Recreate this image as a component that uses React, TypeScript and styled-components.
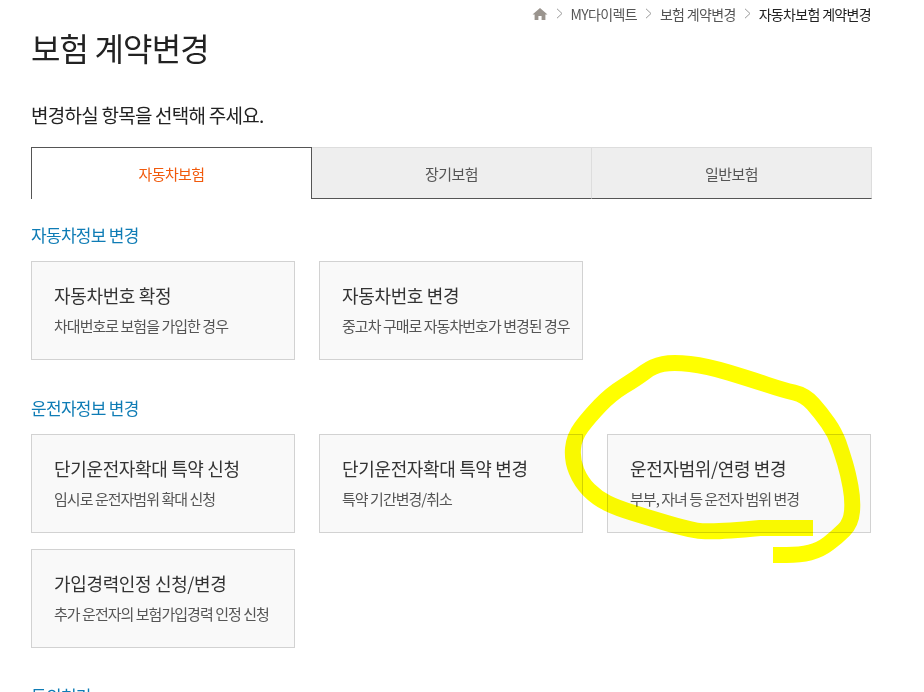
import React from "react";
import styled, { createGlobalStyle } from "styled-components";

const Global = createGlobalStyle`
  html, body { margin: 0; padding: 0; height: 692px; overflow: hidden; background: #fff; }
  body { font-family: "Noto Sans CJK KR", "Noto Sans", sans-serif; color: #222; }
`;

const Page = styled.main`
  position: relative;
  width: 841px;
  height: 692px;
  padding-left: 31px;
  overflow: hidden;
`;

const Breadcrumb = styled.nav`
  display: flex;
  justify-content: flex-end;
  align-items: center;
  height: 27px;
  padding-right: 1px;
  font-size: 14px;
  letter-spacing: -0.67px;
  color: #555;
`;

const Crumb = styled.span<{ $current?: boolean }>`
  color: ${(p) => (p.$current ? "#222" : "#555")};
`;

const SepIcon = styled.svg`
  width: 9px;
  height: 11px;
  margin: 0 7px;
`;

const Title = styled.h1`
  margin: 0;
  height: 41px;
  font-size: 32px;
  line-height: 41px;
  font-weight: 400;
  letter-spacing: -0.85px;
  color: #222;
`;

const Lead = styled.p`
  margin: 35px 0 0;
  height: 24px;
  font-size: 19px;
  line-height: 24px;
  letter-spacing: -0.75px;
  color: #222;
`;

const Tabs = styled.div`
  display: grid;
  grid-template-columns: 281px 280px 280px;
  height: 52px;
  margin-top: 20px;
`;

const Tab = styled.div<{ $active?: boolean }>`
  box-sizing: border-box;
  display: flex;
  align-items: center;
  justify-content: center;
  font-size: 15px;
  letter-spacing: -0.6px;
  background: ${(p) => (p.$active ? "#fff" : "#eee")};
  color: ${(p) => (p.$active ? "#f15a0c" : "#555")};
  border: 1px solid #555;
  border-bottom: ${(p) => (p.$active ? "none" : "1px solid #555")};
  ${(p) =>
    !p.$active &&
    `border-top-color: #ddd; border-left-color: #ddd; border-right-color: #ddd; border-left-width: 0;`}
`;

const SectionTitle = styled.h2<{ $gap: number }>`
  margin: ${(p) => p.$gap}px 0 0;
  height: 24px;
  font-size: 17px;
  line-height: 24px;
  font-weight: 400;
  letter-spacing: -0.7px;
  color: #0f7cb5;
`;

const CardGrid = styled.div`
  display: grid;
  grid-template-columns: repeat(3, 264px);
  grid-auto-rows: 99px;
  gap: 16px 24px;
  margin-top: 14px;
`;

const Card = styled.a`
  box-sizing: border-box;
  display: flex;
  flex-direction: column;
  padding: 20px 22px 0;
  background: #f9f9f9;
  border: 1px solid #d2d2d2;
`;

const CardTitle = styled.strong`
  height: 26px;
  font-size: 18px;
  line-height: 26px;
  font-weight: 400;
  letter-spacing: -0.35px;
  color: #333;
  white-space: nowrap;
`;

const CardText = styled.span`
  margin-top: 8px;
  font-size: 15px;
  line-height: 20px;
  letter-spacing: -0.97px;
  color: #555;
  white-space: nowrap;
`;

const Scribble = styled.svg`
  position: absolute;
  inset: 0;
  width: 924px;
  height: 692px;
  mix-blend-mode: multiply;
  pointer-events: none;
`;

const HomeIcon = () => (
  <svg width="16" height="14" viewBox="0 0 16 14" aria-hidden="true">
    <path d="M8 1 L15.5 7.6 L13.4 7.6 L13.4 13 L9.6 13 L9.6 9 L6.4 9 L6.4 13 L2.6 13 L2.6 7.6 L.5 7.6 Z" fill="#9a948e" />
  </svg>
);

const Sep = () => (
  <SepIcon viewBox="0 0 9 11" aria-hidden="true">
    <path d="M2 .8 L7 5.5 L2 10.2" fill="none" stroke="#999" strokeWidth="1" />
  </SepIcon>
);

const Item = ({ title, text }: { title: string; text: string }) => (
  <Card>
    <CardTitle>{title}</CardTitle>
    <CardText>{text}</CardText>
  </Card>
);

const scribblePoints: [number, number][] = [
  [813, 528], [760, 528], [710, 533], [683, 528], [650, 518], [617, 508], [597, 498], [581, 482],
  [572, 460], [574, 437], [589, 417], [611, 394], [637, 378], [653, 366], [673, 362], [707, 366],
  [750, 379], [783, 390], [805, 395], [821, 413], [835, 433], [842, 453], [848, 473], [853, 500],
  [851, 523], [837, 537], [820, 550], [800, 555], [773, 555],
];

const smoothPath = (pts: [number, number][]) => {
  let d = `M${pts[0][0]} ${pts[0][1]} L${pts[1][0]} ${pts[1][1]}`;
  for (let i = 2; i < pts.length - 1; i++) {
    const mx = (pts[i][0] + pts[i + 1][0]) / 2;
    const my = (pts[i][1] + pts[i + 1][1]) / 2;
    d += ` Q${pts[i][0]} ${pts[i][1]} ${mx} ${my}`;
  }
  const last = pts[pts.length - 1];
  return `${d} L${last[0]} ${last[1]}`;
};

export default function App() {
  return (
    <Page>
      <Global />
      <Breadcrumb>
        <HomeIcon />
        <Sep />
        <Crumb>MY다이렉트</Crumb>
        <Sep />
        <Crumb>보험 계약변경</Crumb>
        <Sep />
        <Crumb $current>자동차보험 계약변경</Crumb>
      </Breadcrumb>
      <Title>보험 계약변경</Title>
      <Lead>변경하실 항목을 선택해 주세요.</Lead>
      <Tabs>
        <Tab $active>자동차보험</Tab>
        <Tab>장기보험</Tab>
        <Tab>일반보험</Tab>
      </Tabs>
      <SectionTitle $gap={24}>자동차정보 변경</SectionTitle>
      <CardGrid>
        <Item title="자동차번호 확정" text="차대번호로 보험을 가입한 경우" />
        <Item title="자동차번호 변경" text="중고차 구매로 자동차번호가 변경된 경우" />
      </CardGrid>
      <SectionTitle $gap={36}>운전자정보 변경</SectionTitle>
      <CardGrid>
        <Item title="단기운전자확대 특약 신청" text="임시로 운전자범위 확대 신청" />
        <Item title="단기운전자확대 특약 변경" text="특약 기간변경/취소" />
        <Item title="운전자범위/연령 변경" text="부부, 자녀 등 운전자 범위 변경" />
        <Item title="가입경력인정 신청/변경" text="추가 운전자의 보험가입경력 인정 신청" />
      </CardGrid>
      <SectionTitle $gap={36}>동의처리</SectionTitle>
      <Scribble viewBox="0 0 924 692" aria-hidden="true">
        <path
          d={smoothPath(scribblePoints)}
          fill="none"
          stroke="#ffff00"
          strokeWidth="16"
          strokeLinejoin="round"
        />
      </Scribble>
    </Page>
  );
}
